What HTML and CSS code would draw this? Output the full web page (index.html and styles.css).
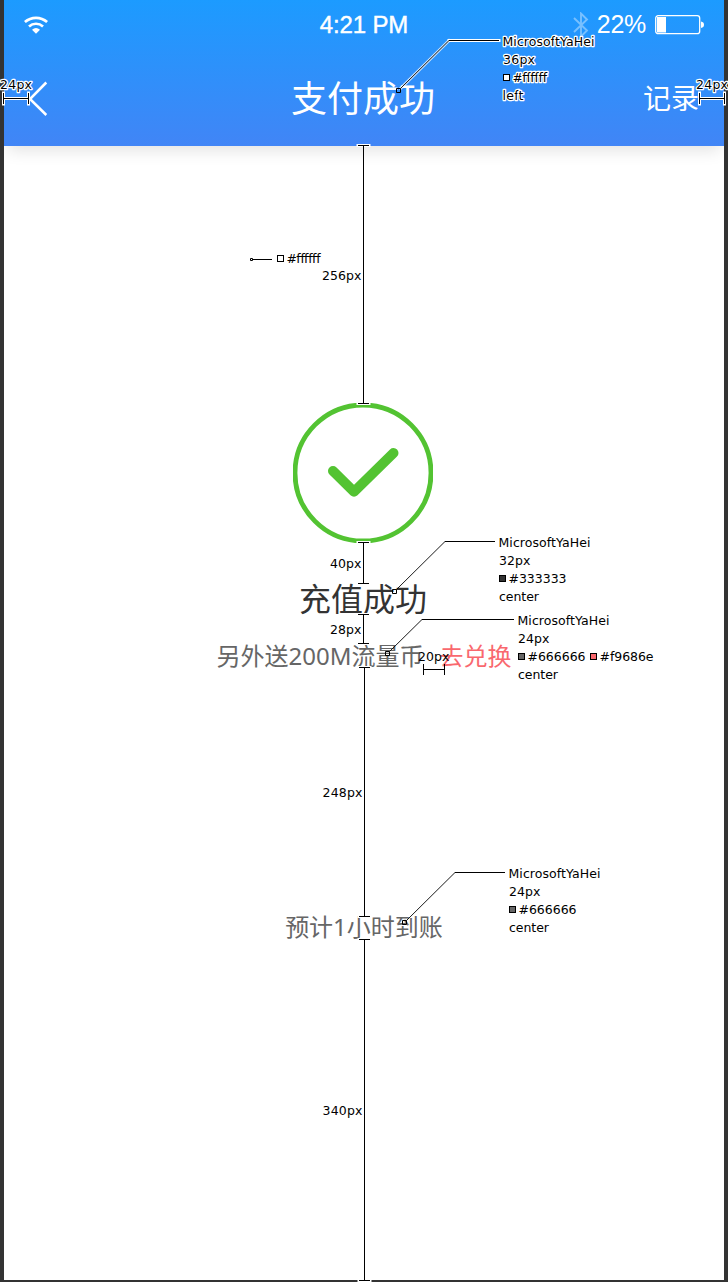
FILE: index.html
```html
<!DOCTYPE html>
<html lang="zh-CN">
<head>
<meta charset="utf-8">
<title>支付成功</title>
<link rel="stylesheet" href="styles.css">
</head>
<body>
<div class="screen">
  <header class="header">
    <div class="status">
      <svg class="wifi" width="24" height="18" viewBox="0 0 24 18"><g fill="none" stroke="#fff" stroke-width="2.7"><path d="M.9 6.100a16.500 16.500 0 0 1 22.200 0"/><path d="M5 10.400a10.600 10.600 0 0 1 14 0"/></g><path d="M8 13.700q4-3.200 8 0l-4 4.100z" fill="#fff"/></svg>
      <span class="clock">4:21 PM</span>
      <div class="power">
        <svg class="bluetooth" width="16" height="26" viewBox="0 0 16 26"><path d="M1 6l13 12.500-6 6V1.500l6 6L1 20" fill="none" stroke="#78c0ff" stroke-width="1.900"/></svg>
        <span class="percent">22%</span>
        <svg class="battery" width="50" height="20" viewBox="0 0 50 20"><rect x=".7" y=".7" width="44" height="18" rx="2.500" fill="none" stroke="#fff" stroke-width="1.300"/><path d="M2 2h9v15.500H2zM46 6.500q3 .5 3 3.200t-3 3.200z" fill="#fff"/></svg>
      </div>
    </div>
    <nav class="nav">
      <svg class="back" width="20" height="36" viewBox="0 0 20 36"><path d="M18.300 2.500L2 19l16.300 16" fill="none" stroke="#fff" stroke-width="2.500"/></svg>
      <h1 class="title">支付成功</h1>
      <span class="record">记录</span>
    </nav>
  </header>
  <main class="result">
    <svg class="success" width="140" height="140" viewBox="0 0 140 140" fill="none" stroke="#53c332"><circle cx="70" cy="70" r="68" stroke-width="4.800"/><path d="M40 68l21 20.800L100.500 50" stroke-width="10" stroke-linecap="round" stroke-linejoin="round"/></svg>
    <h2 class="headline">充值成功</h2>
    <p class="bonus"><span class="gift">另外送200M流量币</span><a class="exchange">去兑换</a></p>
    <p class="arrival">预计1小时到账</p>
  </main>
</div>
<svg class="notes" width="728" height="1282" viewBox="0 0 728 1282">
  <g class="halo">
    <path d="M3.500 93v11M3.500 98.500h25M28.500 93v11M699.500 93v11M699.500 98.500h25M724.500 93v11M449 40.500h50"/>
    <path class="thin" d="M400.500 88.500L449 40.500"/>
    <path d="M358 145.500h11M358 403.500h11M358 542.500h11M358 583.500h11M358 614.500h11M358 643.500h11M359 667.500h11M359 916.500h11M359 939.500h11M359 1280.500h11"/>
  </g>
  <g class="ink">
    <path d="M3.500 93v11M3.500 98.500h25M28.500 93v11M699.500 93v11M699.500 98.500h25M724.500 93v11"/>
    <path d="M358 145.500h11M363.500 146v257M358 403.500h11M358 542.500h11M363.500 543v40M358 583.500h11M358 614.500h11M363.500 615v28M358 643.500h11M359 667.500h11M364.500 668v248M359 916.500h11M359 939.500h11M364.500 940v340M359 1280.500h11"/>
    <path d="M423.500 664v11M423.500 669.500h21M444.500 664v11"/>
    <path d="M449 40.500h50M253 259.500h19M445 541.500h50M422 619.500h92M455 872.500h50"/>
    <path class="thin" d="M400.500 88.500L449 40.500M396.500 589.500L445 541.500M389.500 651.500L422 619.500M406.500 920.500L455 872.500"/>
    <path d="M396.500 88.500h4v4h-4zM392.500 589.500h4v4h-4zM385.500 651.500h4v4h-4zM402.500 920.500h4v4h-4zM250.500 258.500h2v2h-2z"/>
  </g>
  <g class="swatches">
    <rect x="503.500" y="74.500" width="6" height="6" fill="#fff"/>
    <rect x="277.500" y="255.500" width="6" height="6" fill="#fff"/>
    <rect x="499.500" y="575.500" width="6" height="6" fill="#333"/>
    <rect x="518.500" y="653.500" width="6" height="6" fill="#666"/>
    <rect x="590.500" y="653.500" width="6" height="6" fill="#f9686e"/>
    <rect x="509.500" y="906.500" width="6" height="6" fill="#666"/>
  </g>
  <g class="label outlined">
    <text x="0" y="89" textLength="32">24px</text>
    <text x="696" y="89" textLength="32">24px</text>
    <text x="502.500" y="46" textLength="92">MicrosoftYaHei</text>
    <text x="503" y="64" textLength="32">36px</text>
    <text x="512.500" y="82" textLength="34.500">#ffffff</text>
    <text x="502.500" y="100" textLength="21">left</text>
  </g>
  <g class="label">
    <text x="286.500" y="263" textLength="34">#ffffff</text>
    <text x="322" y="280" textLength="39.500">256px</text>
    <text x="330" y="568" textLength="31.500">40px</text>
    <text x="330" y="634" textLength="31.500">28px</text>
    <text x="418" y="661" textLength="31.500">20px</text>
    <text x="322.500" y="797" textLength="40">248px</text>
    <text x="322.500" y="1115" textLength="40">340px</text>
    <text x="498.500" y="547" textLength="92">MicrosoftYaHei</text>
    <text x="499" y="565" textLength="31.500">32px</text>
    <text x="508.500" y="583" textLength="58">#333333</text>
    <text x="499" y="601" textLength="40">center</text>
    <text x="517.500" y="625" textLength="92">MicrosoftYaHei</text>
    <text x="518" y="643" textLength="31.500">24px</text>
    <text x="527.500" y="661" textLength="58">#666666</text>
    <text x="599.500" y="661" textLength="54">#f9686e</text>
    <text x="518" y="679" textLength="40">center</text>
    <text x="508.500" y="878" textLength="92">MicrosoftYaHei</text>
    <text x="509" y="896" textLength="31.500">24px</text>
    <text x="518.500" y="914" textLength="58">#666666</text>
    <text x="509" y="932" textLength="40">center</text>
  </g>
</svg>
</body>
</html>
```

FILE: styles.css
```css
* { box-sizing: border-box; }
body { margin: 0; padding: 0 4px 2px; background: #333; position: relative; width: 728px; height: 1282px; overflow: hidden; font-family: "Noto Sans", "Noto Sans CJK SC", sans-serif; }
h1, h2, p { margin: 0; font-weight: 400; white-space: nowrap; }
.screen { width: 720px; height: 1280px; background: #fff; overflow: hidden; display: flex; flex-direction: column; }
.header { height: 146px; flex: none; color: #fff; background: linear-gradient(#1c9bff, #4185f6); box-shadow: 0 8px 16px -4px rgba(0, 0, 0, .12); }
.status { height: 50px; padding: 0 20px; display: grid; grid-template-columns: 1fr auto 1fr; align-items: center; font-family: "Liberation Sans", Arial, sans-serif; }
.wifi { display: block; margin-top: -1px; }
.clock { font-size: 24px; line-height: 28px; letter-spacing: -.15px; -webkit-text-stroke: .4px #fff; }
.power { display: flex; align-items: center; justify-content: flex-end; margin-right: -1px; }
.bluetooth { margin-right: 8px; }
.percent { font-size: 25px; line-height: 28px; letter-spacing: -.3px; margin-right: 9px; margin-top: -2px; }
.battery { display: block; }
.nav { height: 96px; padding: 0 24px; display: grid; grid-template-columns: 1fr auto 1fr; align-items: center; }
.title { font-size: 36px; line-height: 48px; margin: 2px 2px 0 0; }
.record { justify-self: end; font-size: 28px; line-height: 36px; margin-right: 1px; }
.result { flex: 1; padding-top: 257px; display: flex; flex-direction: column; align-items: center; color: #666; }
.success { display: block; margin-right: 2px; flex: none; }
.headline { margin: 32px 2px 0 0; font-size: 32px; line-height: 48px; color: #333; }
.bonus { margin-top: 15px; display: flex; gap: 16px; font-size: 24px; line-height: 36px; }
.exchange { color: #f9686e; }
.arrival { margin-top: 235px; font-size: 24px; line-height: 36px; }
.notes { position: absolute; left: 0; top: 0; }
.notes path { fill: none; }
.halo path { stroke: #fff; stroke-width: 3; stroke-linecap: square; }
.halo .thin { stroke-opacity: .75; }
.ink path { stroke: #000; stroke-width: 1; }
.ink .thin { stroke-width: .9; }
.swatches rect { stroke: #000; stroke-width: 1; }
.label { font: 12.500px "DejaVu Sans", Verdana, sans-serif; fill: #000; }
.outlined { stroke: #fff; stroke-width: 2.500px; stroke-linejoin: round; paint-order: stroke; }
```
